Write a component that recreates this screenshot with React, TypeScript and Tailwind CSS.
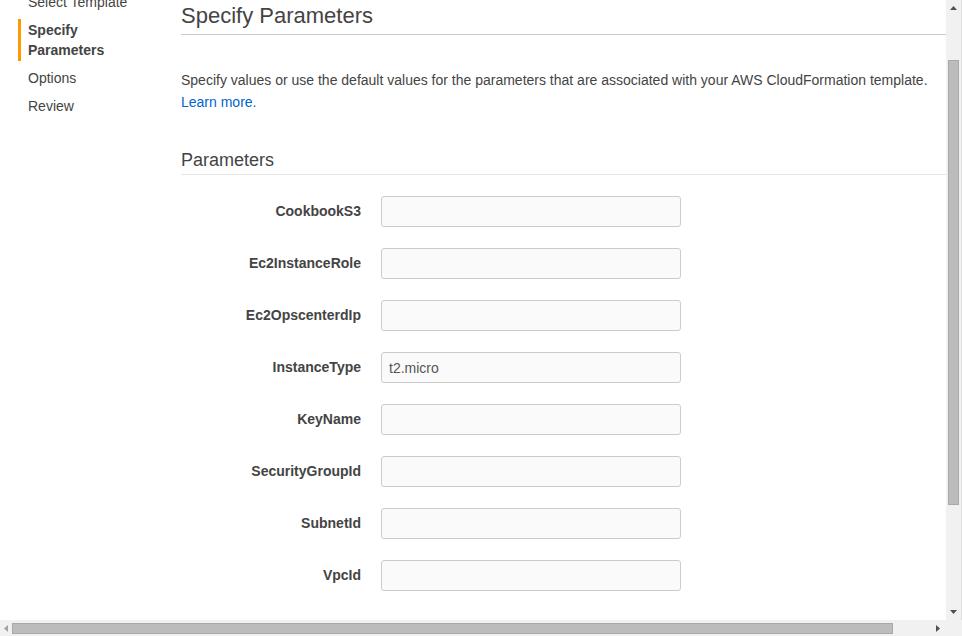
import React from 'react';

const params: { name: string; value?: string }[] = [
  { name: 'CookbookS3' },
  { name: 'Ec2InstanceRole' },
  { name: 'Ec2OpscenterdIp' },
  { name: 'InstanceType', value: 't2.micro' },
  { name: 'KeyName' },
  { name: 'SecurityGroupId' },
  { name: 'SubnetId' },
  { name: 'VpcId' },
];

const steps = [
  { label: 'Select Template' },
  { label: 'Specify Parameters', active: true },
  { label: 'Options' },
  { label: 'Review' },
];

const Arrow: React.FC<{ dir: 'up' | 'down' | 'left' | 'right'; faded?: boolean }> = ({ dir, faded }) => {
  const pts: Record<string, string> = {
    up: '0,4 3.5,0 7,4',
    down: '0,0 3.5,4 7,0',
    left: '4,0 0,3.5 4,7',
    right: '0,0 4,3.5 0,7',
  };
  const vertical = dir === 'up' || dir === 'down';
  return (
    <svg width={vertical ? 7 : 4} height={vertical ? 4 : 7} viewBox={vertical ? '0 0 7 4' : '0 0 4 7'}>
      <polygon points={pts[dir]} fill={faded ? '#a3a3a3' : '#505050'} />
    </svg>
  );
};

export default function App() {
  return (
    <div className="w-[962px] h-[636px] overflow-hidden flex flex-col bg-white text-[#444] font-['Liberation_Sans',Arial,sans-serif]">
      <div className="flex flex-1 min-h-0">
        {/* page content */}
        <div className="flex-1 flex overflow-hidden">
          {/* wizard steps */}
          <nav className="w-[181px] shrink-0 pl-[18px] pr-2">
            <ul className="flex flex-col gap-[6px] -mt-[9px] text-[14px] leading-[20px]">
              {steps.map((s) => (
                <li
                  key={s.label}
                  className={`py-[1px] pl-[7px] border-l-[3px] ${
                    s.active ? 'border-[#ff9900] font-bold text-[#444]' : 'border-transparent text-[#444]'
                  }`}
                >
                  {s.active ? (
                    <>
                      Specify
                      <br />
                      Parameters
                    </>
                  ) : (
                    s.label
                  )}
                </li>
              ))}
            </ul>
          </nav>

          {/* main column */}
          <main className="flex-1 min-w-0">
            <h1 className="text-[22px] leading-[24px] pt-[4px] pb-[6px] border-b border-[#cccccc] text-[#444]">
              Specify Parameters
            </h1>

            <p className="mt-[34px] text-[14px] leading-[22px] text-[#444]">
              Specify values or use the default values for the parameters that are associated with your AWS CloudFormation template.
              <br />
              <a className="text-[#0066cc] cursor-pointer">Learn more.</a>
            </p>

            <h2 className="mt-[35px] text-[18px] leading-[24px] pb-[2px] border-b border-[#e6e6e6] text-[#444]">
              Parameters
            </h2>

            <div className="mt-[21px] flex flex-col gap-[21px]">
              {params.map((p) => (
                <div key={p.name} className="flex items-center gap-[20px]">
                  <label className="w-[180px] text-right text-[14px] font-bold text-[#444]">{p.name}</label>
                  <input
                    defaultValue={p.value}
                    className="w-[300px] h-[31px] rounded-[3px] border border-[#cccccc] bg-[#fafafa] px-[7px] text-[14px] text-[#555] outline-none"
                  />
                </div>
              ))}
            </div>
          </main>
        </div>

        {/* vertical scrollbar */}
        <div className="w-[16px] shrink-0 bg-[#f1f1f1] border-r border-[#dddddd] flex flex-col items-center">
          <div className="h-[16px] flex items-center justify-center">
            <Arrow dir="up" />
          </div>
          <div className="flex-1 w-full flex flex-col pl-[2px] pr-[2px]">
            <div className="mt-[44px] h-[445px] bg-[#bcbcbc] border border-[#a9a9a9]" />
          </div>
          <div className="h-[16px] flex items-center justify-center">
            <Arrow dir="down" />
          </div>
        </div>
      </div>

      {/* horizontal scrollbar */}
      <div className="h-[16px] flex bg-[#f1f1f1]">
        <div className="flex-1 flex items-center">
          <div className="w-[12px] flex justify-center">
            <Arrow dir="left" faded />
          </div>
          <div className="w-[881px] h-[11px] bg-[#bcbcbc] border border-[#a9a9a9]" />
          <div className="flex-1 flex justify-end pr-[6px]">
            <Arrow dir="right" />
          </div>
        </div>
        <div className="w-[16px] bg-[#f1f1f1]" />
      </div>
    </div>
  );
}
